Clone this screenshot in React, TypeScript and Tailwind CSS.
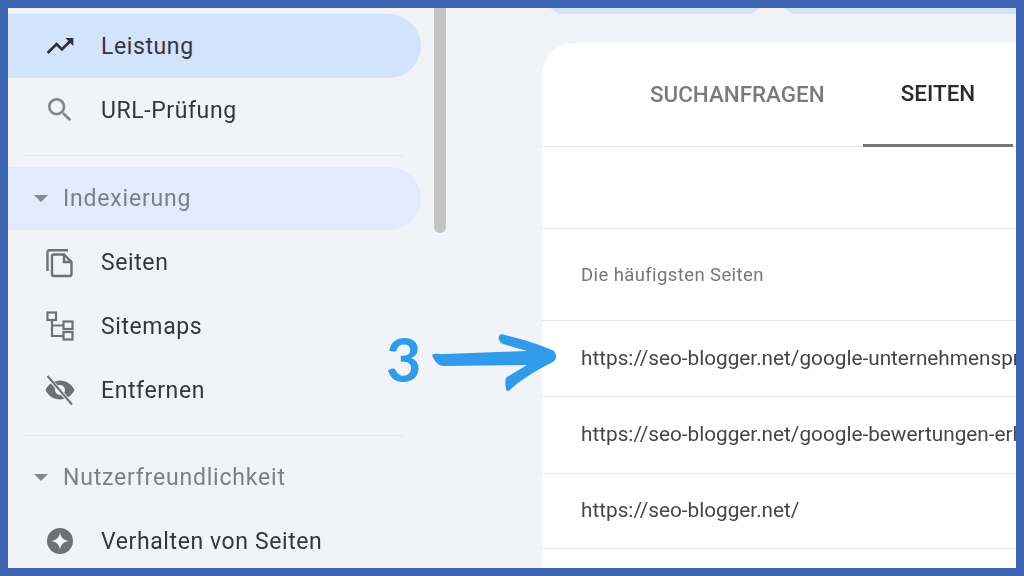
import React from 'react'

const navFont = "font-['Roboto','Liberation_Sans',sans-serif]"

const TrendIcon = () => (
  <svg viewBox="0 0 24 24" className="w-8 h-8 fill-[#2b2f36]">
    <path d="M16 6l2.29 2.29-4.88 4.88-4-4L2 16.59 3.41 18l6-6 4 4 6.3-6.29L22 12V6z" />
  </svg>
)

const SearchIcon = () => (
  <svg viewBox="0 0 24 24" className="w-8 h-8 fill-[#85878a]">
    <path d="M15.5 14h-.79l-.28-.27C15.41 12.59 16 11.11 16 9.500 16 5.910 13.090 3 9.500 3S3 5.910 3 9.500 5.910 16 9.500 16c1.610 0 3.090-.59 4.230-1.570l.27.28v.79l5 4.990L20.490 19l-4.990-5zm-6 0C7.010 14 5 11.990 5 9.500S7.010 5 9.500 5 14 7.010 14 9.500 11.990 14 9.500 14z" />
  </svg>
)

const PagesIcon = () => (
  <svg viewBox="0 0 32 32" className="w-8 h-8 fill-none stroke-[#6e7072] stroke-[2.4]">
    <path d="M24 4.200H5.500a2 2 0 0 0-2 2V25" />
    <path d="M10 8.500h10l7.500 7.500V28a2 2 0 0 1-2 2H10a2 2 0 0 1-2-2V10.500a2 2 0 0 1 2-2z" />
    <path d="M20 8.500V16h7.500" />
  </svg>
)

const SitemapIcon = () => (
  <svg viewBox="0 0 32 32" className="w-8 h-8 fill-none stroke-[#6e7072] stroke-[2.2]">
    <rect x="3.500" y="2.500" width="8.500" height="7.500" />
    <rect x="19.500" y="11.500" width="9" height="7.500" />
    <rect x="19.500" y="22" width="9" height="7.500" />
    <path d="M8 10v16h11.500M8 15.500h11.500" />
  </svg>
)

const EyeOffIcon = () => (
  <svg viewBox="0 0 32 32" className="w-8 h-8">
    <path
      className="fill-[#6e7072]"
      fillRule="evenodd"
      d="M16 6.500c6.500 0 12 4 14.500 9.500-2.500 5.500-8 9.500-14.500 9.500S4 21.500 1.500 16C4 10.500 9.500 6.500 16 6.500zM16 11a5 5 0 1 0 0 10 5 5 0 0 0 0-10z"
    />
    <path d="M3.500 2.500 27.500 30" className="stroke-[#f0f4f9] stroke-[4]" />
    <path d="M3.500 2 28 30.500" className="stroke-[#6e7072] stroke-[2]" />
  </svg>
)

const ExperienceIcon = () => (
  <svg viewBox="0 0 32 32" className="w-8 h-8">
    <circle cx="16" cy="16" r="13" className="fill-[#6e7072]" />
    <path d="M16 7.500c.8 5 3.500 7.700 8.500 8.500-5 .8-7.700 3.500-8.500 8.500-.8-5-3.500-7.700-8.500-8.500 5-.8 7.700-3.500 8.500-8.500z" className="fill-[#f0f4f9]" />
  </svg>
)

const Caret = () => (
  <span className="w-0 h-0 border-x-[7px] border-x-transparent border-t-[7px] border-t-[#85888c]" />
)

const NavItem: React.FC<{ icon: React.ReactNode; label: string; active?: boolean }> = ({ icon, label, active }) => (
  <div className={`flex items-center h-16 pl-9 rounded-r-[32px] ${active ? 'bg-[#d3e3fd]' : ''}`}>
    {icon}
    <span className="ml-[25px] pt-[2px] text-[23px] font-[450] tracking-[0.6px] text-[#33363a]">{label}</span>
  </div>
)

const SectionHeader: React.FC<{ label: string; active?: boolean }> = ({ label, active }) => (
  <div className={`flex items-center h-[63px] pl-[26px] rounded-r-[32px] ${active ? 'bg-[#e1ebfc]' : ''}`}>
    <Caret />
    <span className="ml-[15px] pt-[2px] text-[23px] font-[450] tracking-[0.8px] text-[#7c7f83]">{label}</span>
  </div>
)

const Divider = () => <div className="h-px bg-[#e5e8ec] ml-4 w-[380px]" />

const rows = [
  'https://seo-blogger.net/google-unternehmensprofil-optimieren/',
  'https://seo-blogger.net/google-bewertungen-erhalten/',
  'https://seo-blogger.net/',
]

export default function App() {
  return (
    <div className={`relative w-[1024px] h-[576px] overflow-hidden border-8 border-[#3e65b1] bg-[#f0f4f9] flex ${navFont}`}>
      <aside className="relative w-[534px] shrink-0 blur-[0.4px]">
        <div className="w-[413px] pt-1.5">
          <NavItem active icon={<TrendIcon />} label="Leistung" />
          <NavItem icon={<SearchIcon />} label="URL-Prüfung" />
          <div className="mt-[13px] mb-[11px]"><Divider /></div>
          <SectionHeader active label="Indexierung" />
          <NavItem icon={<PagesIcon />} label="Seiten" />
          <NavItem icon={<SitemapIcon />} label="Sitemaps" />
          <NavItem icon={<EyeOffIcon />} label="Entfernen" />
          <div className="mt-[13px] mb-[10px]"><Divider /></div>
          <SectionHeader label="Nutzerfreundlichkeit" />
          <NavItem icon={<ExperienceIcon />} label="Verhalten von Seiten" />
        </div>
        {/* scrollbar */}
        <div className="absolute left-[426px] top-0 w-3 h-[225px] bg-[#c4c4c4] rounded-b-md" />
      </aside>

      <main className="flex-1 min-w-0 blur-[0.4px]">
        <div className="flex h-[35px] overflow-hidden gap-[18px] pl-[5px]">
          <div className="w-[216px] h-4 -mt-2.5 bg-[#d3e3fd] rounded-b-2xl" />
          <div className="flex-1 h-4 -mt-2.5 bg-[#d3e3fd] rounded-bl-2xl" />
        </div>
        <div className="bg-white rounded-tl-[32px] h-[600px] overflow-hidden">
          <div className="flex h-[104px] border-b border-[#e4e6e8]">
            <div className="pl-[108px] w-[321px] flex items-center pt-[1px] text-[22.4px] font-medium text-[#7b7b7b]">SUCHANFRAGEN</div>
            <div className="w-[150px] flex items-center justify-center pt-[1px] text-[22.4px] font-medium text-[#2b2b2e] border-b-[3px] border-[#777777] -mb-px">SEITEN</div>
          </div>
          <div className="h-[82px] border-b border-[#e4e6e8]" />
          <div className="h-[92px] flex items-center pl-[39px] pt-[2px] border-b border-[#e4e6e8] text-[18.5px] tracking-[0.4px] font-normal text-[#73767a]">Die häufigsten Seiten</div>
          {rows.map((url, i) => (
            <div key={url} className={`flex items-center pl-[39px] border-b border-[#e4e6e8] text-[20.75px] text-[#444648] whitespace-nowrap ${i === 0 ? 'h-[76px]' : i === 1 ? 'h-[77px]' : 'h-[75px]'}`}>
              {url}
            </div>
          ))}
        </div>
      </main>

      {/* annotation */}
      <span className="absolute left-[378px] top-[316px] text-[61px] leading-[70px] font-bold font-['Lato',sans-serif] text-[#2f9be9]">3</span>
      <svg viewBox="0 0 130 65" className="absolute left-[422px] top-[322px] w-[130px] h-[65px]">
        <path
          className="fill-[#2f9be9]"
          d="M2 25C4 23 8 24 14 24L97 21 73 14C69 12 68 8 69 6 70 4 72 4 75 5 92 9 108 14 122 20 125 21 126 24 126 27 126 30 124 31 121 33 107 40 90 50 80 60 77 62 76 61 76 58 75 53 75 49 77 47L97 35 14 36C8 36 4 31 2 25Z"
        />
      </svg>
    </div>
  )
}
